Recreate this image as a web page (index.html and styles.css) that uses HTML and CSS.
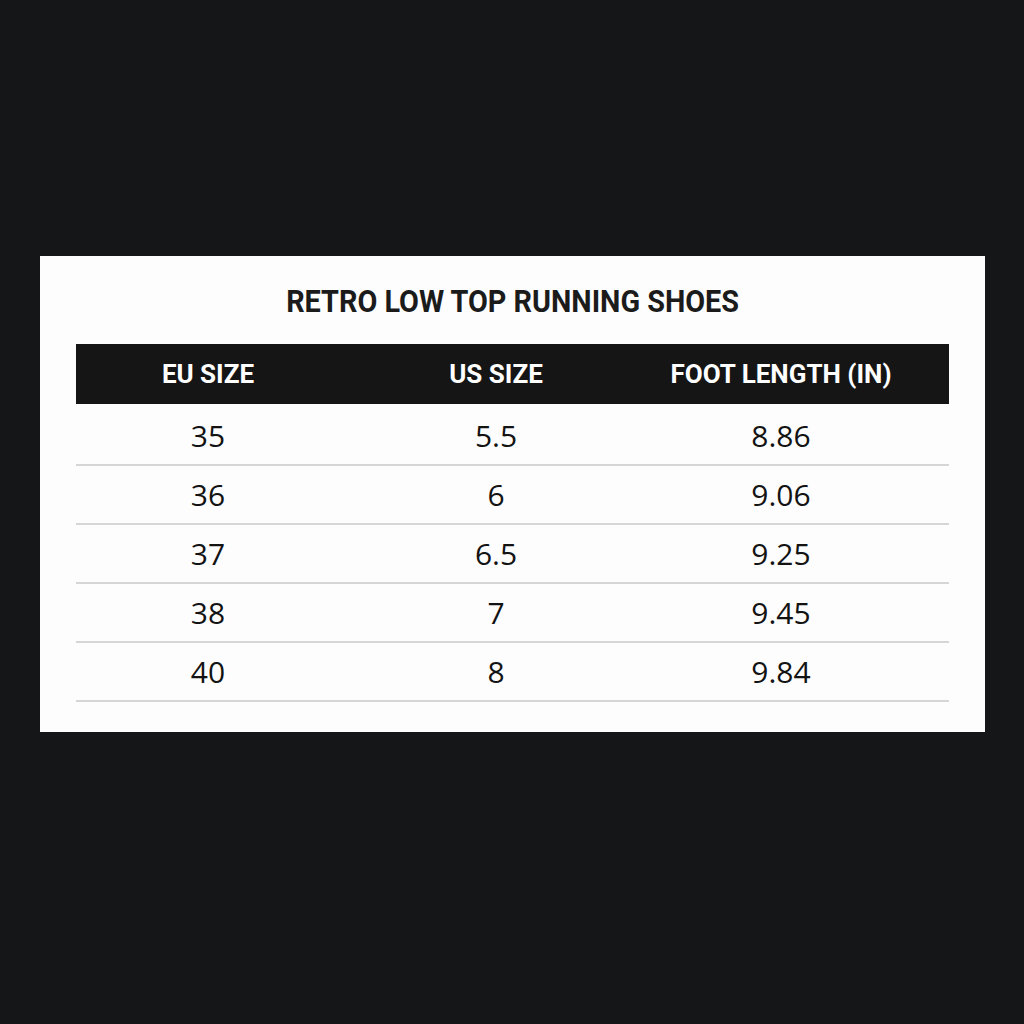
FILE: index.html
```html
<!DOCTYPE html>
<html lang="en">
<head>
<meta charset="utf-8">
<title>Retro Low Top Running Shoes – Size Chart</title>
<link rel="stylesheet" href="styles.css">
</head>
<body>
<main class="page">
  <section class="card">
    <h1 class="title"><span class="title-text">RETRO LOW TOP RUNNING SHOES</span></h1>
    <div class="table">
      <div class="row head">
        <div class="cell">EU SIZE</div>
        <div class="cell">US SIZE</div>
        <div class="cell">FOOT LENGTH (IN)</div>
      </div>
      <div class="row first">
        <div class="cell">35</div><div class="cell">5.5</div><div class="cell">8.86</div>
      </div>
      <div class="row">
        <div class="cell">36</div><div class="cell">6</div><div class="cell">9.06</div>
      </div>
      <div class="row">
        <div class="cell">37</div><div class="cell">6.5</div><div class="cell">9.25</div>
      </div>
      <div class="row">
        <div class="cell">38</div><div class="cell">7</div><div class="cell">9.45</div>
      </div>
      <div class="row">
        <div class="cell">40</div><div class="cell">8</div><div class="cell">9.84</div>
      </div>
    </div>
  </section>
</main>
</body>
</html>
```
FILE: styles.css
```css
* { box-sizing: border-box; }
html, body {
  margin: 0;
  padding: 0;
  background: #151618;
}
.page {
  width: 1024px;
  height: 1024px;
  display: flex;
  justify-content: center;
  padding-top: 256px;
  padding-left: 1px;
}
.card {
  width: 945px;
  height: 476px;
  background: #fdfdfd;
  padding: 25px 36px 0 36px;
}
.title {
  margin: 0;
  height: 63px;
  text-align: center;
  font-family: Roboto, "Liberation Sans", sans-serif;
  font-weight: 700;
  font-size: 32px;
  line-height: 40px;
  color: #1b1b1b;
}
.title-text {
  display: inline-block;
  transform: scaleX(0.9);
  transform-origin: center;
}
.table {
  display: flex;
  flex-direction: column;
}
.row {
  display: grid;
  grid-template-columns: 264px 312px 258px;
  height: 59px;
  align-items: center;
  border-bottom: 2px solid #d6d6d6;
  font-family: "Open Sans", "Noto Sans", sans-serif;
  font-size: 30px;
  color: #131313;
}
.row.first {
  height: 62px;
  padding-top: 2px;
}
.row.head {
  background: #151515;
  color: #ffffff;
  font-family: Roboto, "Liberation Sans", sans-serif;
  font-weight: 700;
  font-size: 26px;
  border-bottom: none;
  height: 60px;
}
.cell {
  text-align: center;
  white-space: nowrap;
}
```
